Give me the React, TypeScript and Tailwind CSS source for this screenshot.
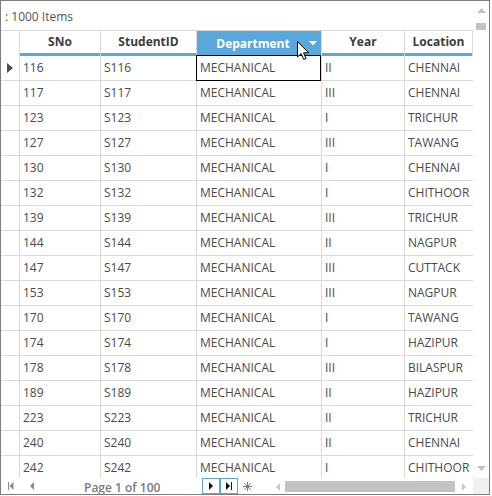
const rows: [string, string, string, string][] = [
  ["116", "S116", "II", "CHENNAI"],
  ["117", "S117", "III", "CHENNAI"],
  ["123", "S123", "I", "TRICHUR"],
  ["127", "S127", "III", "TAWANG"],
  ["130", "S130", "I", "CHENNAI"],
  ["132", "S132", "I", "CHITHOOR"],
  ["139", "S139", "III", "TRICHUR"],
  ["144", "S144", "II", "NAGPUR"],
  ["147", "S147", "III", "CUTTACK"],
  ["153", "S153", "III", "NAGPUR"],
  ["170", "S170", "I", "TAWANG"],
  ["174", "S174", "I", "HAZIPUR"],
  ["178", "S178", "III", "BILASPUR"],
  ["189", "S189", "II", "HAZIPUR"],
  ["223", "S223", "II", "TRICHUR"],
  ["240", "S240", "II", "CHENNAI"],
  ["242", "S242", "I", "CHITHOOR"],
];

const cell = "shrink-0 h-full border-r border-[#d9d9d9] flex items-center pl-[3px] overflow-hidden whitespace-nowrap";
const head = "shrink-0 h-full border-r border-[#d9d9d9] flex flex-col";

function HeaderCell({ label, w }: { label: string; w: string }) {
  return (
    <div className={`${head} ${w}`}>
      <div className="flex-1 flex items-center justify-center font-bold text-[#3c3c3c]">{label}</div>
      <div className="h-[3px] bg-[#5aa7dc]" />
    </div>
  );
}

export default function App() {
  return (
    <div className="w-[492px] h-[496px] bg-white" style={{ fontFamily: '"Open Sans", "Noto Sans", sans-serif' }}>
      <div className="relative w-[490px] h-[495px] border border-[#7d7d7d] flex flex-col overflow-hidden text-[12px] text-[#4a4a4a]">
        <div className="flex h-[477px] shrink-0">
          <div className="w-[472px] flex flex-col overflow-hidden">
            <div className="h-[30px] shrink-0 border-b border-[#d9d9d9] flex items-center pl-[4px] pt-[2px] text-[#555]">: 1000 Items</div>
            <div className="h-[25px] shrink-0 flex">
              <div className="w-[19px] shrink-0 h-full border-r border-[#d9d9d9]" />
              <HeaderCell label="SNo" w="w-[81px]" />
              <HeaderCell label="StudentID" w="w-[96px]" />
              <div className={`${head} w-[125px] bg-[#5aa7dc] relative`}>
                <div className="flex-1 flex items-center justify-center pr-[12px] font-bold text-white">Department</div>
                <svg className="absolute left-[112px] top-[10px]" width="8" height="5" viewBox="0 0 8 5">
                  <path d="M0 0 H8 L4 4.5 Z" fill="#fff" />
                </svg>
              </div>
              <HeaderCell label="Year" w="w-[83px]" />
              <HeaderCell label="Location" w="w-[68px]" />
            </div>
            {rows.map((r, i) => (
              <div key={r[0]} className="h-[25px] shrink-0 flex border-b border-[#d9d9d9]">
                <div className="w-[19px] shrink-0 h-full border-r border-[#d9d9d9] flex items-center pl-[6px]">
                  {i === 0 && (
                    <svg width="6" height="10" viewBox="0 0 6 10">
                      <path d="M0 0 L6 5 L0 10 Z" fill="#4d4d4d" />
                    </svg>
                  )}
                </div>
                <div className={`${cell} w-[81px]`}>{r[0]}</div>
                <div className={`${cell} w-[96px]`}>{r[1]}</div>
                <div className={`${cell} w-[125px] relative overflow-visible`}>
                  MECHANICAL
                  {i === 0 && <div className="absolute left-[-1px] top-[-1px] right-0 bottom-[-1px] border border-black" />}
                </div>
                <div className={`${cell} w-[83px]`}>{r[2]}</div>
                <div className={`${cell} w-[68px] border-r-0`}>{r[3]}</div>
              </div>
            ))}
          </div>
          <div className="w-[16px] shrink-0 flex flex-col items-center bg-white">
            <svg className="mt-[7px]" width="9" height="5" viewBox="0 0 9 5">
              <path d="M0 5 L4.5 0 L9 5 Z" fill="#c2c2c2" />
            </svg>
            <div className="mt-[10px] w-[10px] h-[7px] bg-[#c2c2c2]" />
            <div className="flex-1" />
            <svg className="mb-[7px]" width="9" height="5" viewBox="0 0 9 5">
              <path d="M0 0 L9 0 L4.5 5 Z" fill="#c2c2c2" />
            </svg>
          </div>
        </div>
        <div className="h-[16px] shrink-0 flex items-stretch">
          <div className="w-[269px] shrink-0 flex items-center relative">
            <svg className="ml-[7px]" width="6" height="8" viewBox="0 0 6 8">
              <rect x="0" y="0" width="1" height="8" fill="#8a8a8a" />
              <path d="M5.5 0 L1.5 4 L5.5 8 Z" fill="#8a8a8a" />
            </svg>
            <svg className="ml-[16px]" width="4" height="8" viewBox="0 0 4 8">
              <path d="M4 0 L0 4 L4 8 Z" fill="#8a8a8a" />
            </svg>
            <div className="ml-[50px] font-semibold text-[#7a7a7a] leading-[16px] translate-y-[2px] whitespace-nowrap">Page 1 of 100</div>
            <div className="absolute left-[201px] top-0 flex">
              <div className="w-[18px] h-[16px] border border-[#5aa7dc] flex items-center justify-center">
                <svg width="4" height="8" viewBox="0 0 4 8">
                  <path d="M0 0 L4 4 L0 8 Z" fill="#111" />
                </svg>
              </div>
              <div className="w-[18px] h-[16px] border border-[#5aa7dc] flex items-center justify-center">
                <svg width="6" height="8" viewBox="0 0 6 8">
                  <path d="M0 0 L4 4 L0 8 Z" fill="#111" />
                  <rect x="5" y="0" width="1" height="8" fill="#111" />
                </svg>
              </div>
              <div className="ml-[4px] w-[10px] flex items-center justify-center text-[#777]">
                <svg width="9" height="9" viewBox="0 0 9 9">
                  <path d="M4.5 0 V9 M0 4.5 H9 M1.3 1.3 L7.7 7.7 M7.7 1.3 L1.3 7.7" stroke="#777" strokeWidth="1" />
                </svg>
              </div>
            </div>
          </div>
          <div className="w-[203px] shrink-0 flex items-center pt-[1px]">
            <svg className="ml-[6px]" width="4" height="8" viewBox="0 0 4 8">
              <path d="M4 0 L0 4 L4 8 Z" fill="#c8c8c8" />
            </svg>
            <div className="ml-[5px] w-[170px] h-[11px] bg-[#c2c2c2]" />
            <svg className="ml-[7px]" width="4" height="8" viewBox="0 0 4 8">
              <path d="M0 0 L4 4 L0 8 Z" fill="#c8c8c8" />
            </svg>
          </div>
          <div className="w-[16px] shrink-0 bg-[#f0f0f0]" />
        </div>
        <svg className="absolute left-[296px] top-[40px]" width="13" height="20" viewBox="0 0 13 20">
          <path d="M0.5 0.5 L0.5 16 L4.2 12.6 L6.7 18.5 L9 17.5 L6.6 11.8 L11.5 11.8 Z" fill="#fff" stroke="#000" strokeWidth="1" strokeLinejoin="round" />
        </svg>
      </div>
    </div>
  );
}
